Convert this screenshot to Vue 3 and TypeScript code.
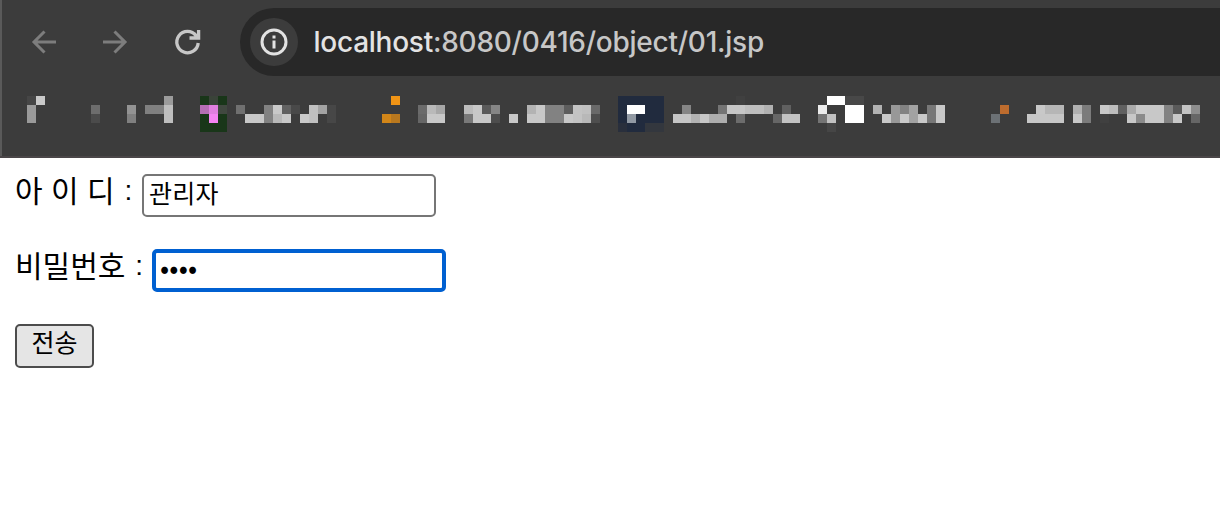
<script setup lang="ts">
import { ref } from 'vue'

type Block = [x: number, y: number, width: number, height: number, fill: string]

const userId = ref('관리자')
const password = ref('1234')

// Pixelated bookmark labels and favicons, relative to the bookmark strip
const blocks: Block[] = [
  [27, 0, 9, 9, '#464646'], [36, 0, 9, 9, '#c9c9c9'], [27, 9, 9, 18, '#9a9a9a'],
  [91, 9, 9, 9, '#6d6d6d'], [91, 18, 9, 9, '#4b4b4b'],
  [127, 9, 9, 9, '#939393'], [127, 18, 9, 9, '#808080'],
  [145, 9, 19, 9, '#808080'], [164, 0, 9, 9, '#9b9b9b'], [164, 9, 9, 18, '#bebebe'],

  [200, 0, 27, 36, '#193619'], [209, 0, 9, 9, '#3a4339'], [200, 9, 9, 9, '#b56fb4'],
  [209, 9, 9, 9, '#e07fdf'], [218, 9, 9, 9, '#414840'], [209, 18, 9, 9, '#f484f2'],
  [236, 9, 9, 9, '#707070'], [245, 18, 19, 9, '#c8c8c8'], [264, 9, 9, 18, '#828282'],
  [273, 9, 9, 9, '#c9c9c9'], [273, 18, 9, 9, '#b9b9b9'], [282, 9, 9, 9, '#616161'],
  [282, 18, 9, 9, '#c9c9c9'], [291, 9, 9, 9, '#494949'], [300, 18, 9, 9, '#c9c9c9'],
  [309, 9, 9, 18, '#c0c0c0'], [318, 9, 9, 9, '#a3a3a3'], [327, 9, 9, 18, '#474747'],

  [391, 0, 9, 9, '#f09415'], [382, 18, 9, 9, '#d28619'], [391, 18, 9, 9, '#b9781e'],
  [418, 9, 9, 9, '#6b6b6b'], [418, 18, 9, 9, '#666666'], [427, 9, 9, 9, '#b9b9b9'],
  [436, 9, 9, 9, '#a7a7a7'], [427, 18, 18, 9, '#c8c8c8'],
  [464, 9, 9, 9, '#bcbcbc'], [464, 18, 9, 9, '#797979'], [473, 9, 9, 18, '#c8c8c8'],
  [482, 9, 9, 9, '#5a5a5a'], [482, 18, 9, 9, '#c8c8c8'], [491, 9, 9, 9, '#858585'],
  [491, 18, 9, 9, '#4d4d4d'], [509, 18, 9, 9, '#c8c8c8'],
  [527, 9, 9, 9, '#b3b3b3'], [527, 18, 9, 9, '#c8c8c8'], [536, 9, 9, 18, '#c8c8c8'],
  [545, 9, 19, 18, '#828282'], [564, 9, 9, 9, '#5d5d5d'], [564, 18, 9, 9, '#c8c8c8'],
  [573, 9, 9, 18, '#c3c3c3'], [582, 9, 9, 9, '#c0c0c0'], [582, 18, 9, 9, '#b8b8b8'],
  [591, 9, 9, 9, '#696969'], [591, 18, 9, 9, '#4e4e4e'],

  [618, 0, 46, 36, '#212b3e'], [627, 9, 18, 9, '#ffffff'], [627, 18, 9, 9, '#9199a3'],
  [618, 27, 9, 9, '#292f3c'], [645, 27, 19, 9, '#33373e'],
  [673, 18, 18, 9, '#c5c5c5'], [682, 9, 9, 9, '#858585'], [691, 18, 9, 9, '#b2b2b2'],
  [700, 18, 9, 9, '#c6c6c6'], [709, 18, 18, 9, '#adadad'], [718, 9, 9, 9, '#747474'],
  [727, 9, 18, 9, '#c6c6c6'], [736, 0, 9, 9, '#404040'], [736, 18, 9, 9, '#6c6c6c'],
  [745, 9, 19, 9, '#bebebe'], [764, 9, 9, 9, '#b1b1b1'], [773, 18, 9, 9, '#666666'],
  [782, 9, 9, 9, '#606060'], [782, 18, 18, 9, '#c2c2c2'],

  [827, 0, 18, 9, '#ffffff'], [845, 0, 19, 9, '#484848'], [818, 9, 9, 9, '#ebebeb'],
  [818, 18, 9, 9, '#747474'], [827, 18, 9, 9, '#c1c1c1'], [827, 27, 9, 9, '#464646'],
  [845, 9, 19, 18, '#ffffff'],
  [873, 9, 9, 9, '#b2b2b2'], [882, 18, 9, 9, '#c8c8c8'], [891, 9, 9, 18, '#989898'],
  [900, 9, 9, 9, '#828282'], [900, 18, 9, 9, '#c9c9c9'], [909, 9, 9, 18, '#a2a2a2'],
  [918, 18, 9, 9, '#c8c8c8'], [927, 9, 9, 18, '#777777'], [936, 9, 9, 18, '#c8c8c8'],

  [1000, 9, 9, 9, '#bd6c2e'], [991, 18, 9, 9, '#6c7175'],
  [1036, 9, 9, 9, '#c8c8c8'], [1045, 9, 19, 9, '#b6b6b6'], [1027, 18, 37, 9, '#c7c7c7'],
  [1073, 9, 9, 9, '#b0b0b0'], [1073, 18, 9, 9, '#c8c8c8'], [1082, 9, 9, 18, '#7b7b7b'],
  [1100, 9, 9, 9, '#c8c8c8'], [1100, 18, 9, 9, '#404040'], [1109, 9, 9, 9, '#bdbdbd'],
  [1118, 9, 9, 9, '#606060'], [1127, 9, 9, 9, '#aaaaaa'], [1127, 18, 9, 9, '#c8c8c8'],
  [1136, 9, 28, 18, '#c8c8c8'], [1136, 18, 9, 9, '#8b8b8b'], [1164, 9, 9, 18, '#828282'],
  [1173, 9, 9, 9, '#5a5a5a'], [1173, 18, 9, 9, '#c8c8c8'], [1182, 9, 9, 9, '#c3c3c3'],
  [1191, 9, 9, 9, '#8d8d8d'], [1191, 18, 9, 9, '#666666'],
]
</script>

<template>
  <div class="window">
    <header class="chrome">
      <div class="toolbar">
        <svg class="nav-icon" viewBox="0 0 32 32">
          <path d="M28 16H6M16.500 5.500L6 16l10.500 10.500" />
        </svg>
        <svg class="nav-icon" viewBox="0 0 32 32">
          <path d="M3 16h22M14.500 5.500L25 16 14.500 26.500" />
        </svg>
        <svg class="nav-icon reload" viewBox="0 0 32 32">
          <path d="M26.200 17A10.700 10.700 0 1 1 24 9.500M26.600 4V12H17.500M26 11.500l-4-4" />
        </svg>
        <div class="address">
          <span class="site-info">
            <svg viewBox="0 0 28 28">
              <circle cx="14" cy="14" r="12" />
              <path d="M14 12.500v8M14 7.500v3" />
            </svg>
          </span>
          <span class="url"><b>localhost</b>:8080/0416/object/01.jsp</span>
        </div>
      </div>
      <svg class="bookmarks" viewBox="0 0 1220 36" shape-rendering="crispEdges">
        <rect
          v-for="([x, y, width, height, fill], i) in blocks"
          :key="i"
          :x="x"
          :y="y"
          :width="width"
          :height="height"
          :fill="fill"
        />
      </svg>
    </header>

    <form class="login" @submit.prevent>
      <div class="row">
        <label class="id-label" for="user-id">아 이 디 <span class="colon">:</span></label>
        <input id="user-id" v-model="userId" type="text">
      </div>
      <div class="row">
        <label class="pw-label" for="password">비밀번호 <span class="colon">:</span></label>
        <input id="password" v-model="password" class="active" type="password">
      </div>
      <button type="submit">
        전송
      </button>
    </form>
  </div>
</template>

<style>
body {
  margin: 0;
  background: #fff;
}
</style>

<style scoped>
.window {
  height: 532px;
  overflow: hidden;
  background: #fff;
  color: #000;
}

.chrome {
  box-sizing: border-box;
  height: 158px;
  padding-top: 8px;
  background: #3c3c3c;
  border-bottom: 2px solid #4a4648;
  box-shadow: inset 2px 0 #5a5a5a;
}

.toolbar {
  display: flex;
  align-items: center;
  height: 68px;
  padding-left: 28px;
}

.nav-icon {
  flex: none;
  width: 32px;
  height: 32px;
  margin-right: 40px;
  fill: none;
  stroke: #7d7d7d;
  stroke-width: 3;
}

.nav-icon.reload {
  margin-right: 36px;
  stroke: #c7c7c7;
  stroke-width: 3.300;
}

.address {
  display: flex;
  flex: 1;
  align-items: center;
  height: 68px;
  padding-left: 9.500px;
  border-radius: 34px 0 0 34px;
  background: #282828;
}

.site-info {
  display: flex;
  align-items: center;
  justify-content: center;
  width: 48px;
  height: 48px;
  margin-right: 16px;
  border-radius: 50%;
  background: #3c3c3c;
}

.site-info svg {
  width: 28px;
  height: 28px;
  fill: none;
  stroke: #e3e3e3;
  stroke-width: 3;
}

.url {
  color: #c7c7c7;
  font: 500 28px Inter, sans-serif;
  letter-spacing: -0.250px;
  white-space: nowrap;
}

.url b {
  color: #e3e3e3;
  font-weight: 500;
}

.bookmarks {
  display: block;
  width: 1220px;
  height: 36px;
  margin-top: 20px;
}

.login {
  padding: 16px 15px;
  font-family: "Noto Sans CJK KR", sans-serif;
}

.row {
  display: flex;
  align-items: center;
  height: 43px;
  margin-bottom: 32px;
}

label {
  flex: none;
  font-size: 30px;
  line-height: 36px;
  padding-bottom: 13px;
  white-space: pre;
  word-spacing: 1.700px;
}

.colon {
  margin-left: 1.500px;
  font: 28px/1 "Liberation Sans", sans-serif;
  vertical-align: 2px;
}

.id-label {
  width: 126.600px;
}

.pw-label {
  padding-bottom: 14px;
  width: 137.400px;
}

input {
  box-sizing: border-box;
  width: 294px;
  height: 43px;
  padding: 0 6px 7px 5.500px;
  border: 2px solid #767676;
  border-radius: 5px;
  outline: none;
  background: #fff;
  color: #000;
  font: 25px "Noto Sans CJK KR", sans-serif;
  letter-spacing: 0.200px;
}

input.active {
  padding: 0 4px 9px 3.500px;
  border: 4px solid #0060d1;
  font-size: 27px;
}

button {
  display: block;
  box-sizing: border-box;
  width: 79px;
  height: 44px;
  padding: 0 0 9px;
  border: 2px solid #4c4c4c;
  border-radius: 5px;
  background: #e5e5e5;
  color: #000;
  font: 25px/31px "Noto Sans CJK KR", sans-serif;
}
</style>
